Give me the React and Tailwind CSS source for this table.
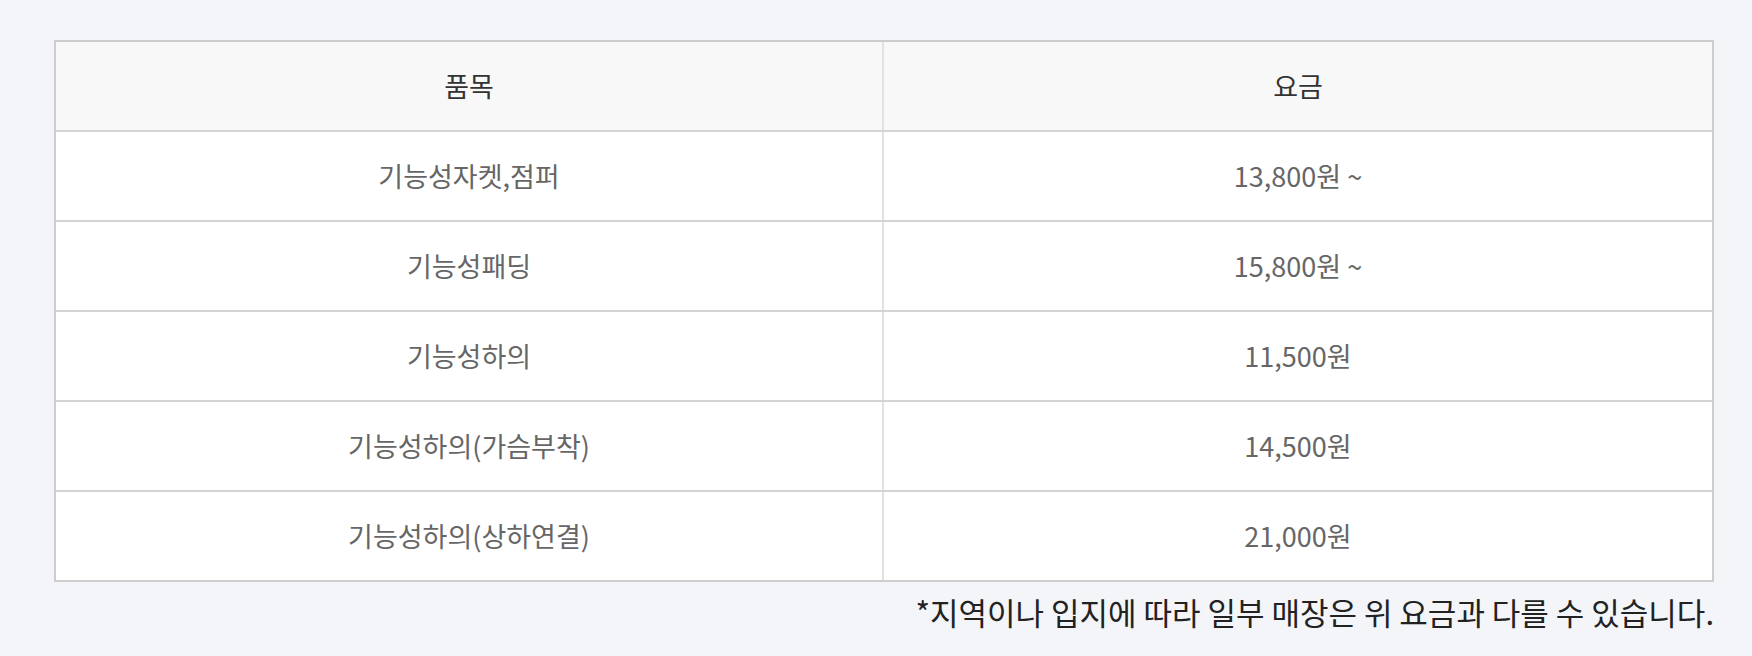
import React from "react";

const rows = [
  { name: "기능성자켓,점퍼", price: "13,800원 ~" },
  { name: "기능성패딩", price: "15,800원 ~" },
  { name: "기능성하의", price: "11,500원" },
  { name: "기능성하의(가슴부착)", price: "14,500원" },
  { name: "기능성하의(상하연결)", price: "21,000원" },
];

export default function App() {
  return (
    <div
      className="min-h-[656px] w-full bg-[#f4f5f9] pt-[40px]"
      style={{ fontFamily: '"Noto Sans CJK KR", "Noto Sans", sans-serif' }}
    >
      <div className="ml-[54px] w-[1660px]">
        {/* 요금표 */}
        <div className="border-2 border-[#cdcdcd]">
          <div className="grid grid-cols-2 border-b-2 border-[#d4d4d4] bg-[#f8f8f8]">
            <div className="flex h-[88px] items-center justify-center border-r-2 border-[#e2e2e2] text-[27px] text-[#333]">
              품목
            </div>
            <div className="flex h-[88px] items-center justify-center text-[27px] text-[#333]">
              요금
            </div>
          </div>
          {rows.map((row, i) => (
            <div
              key={row.name}
              className={
                i === rows.length - 1
                  ? "grid grid-cols-2 bg-white"
                  : "grid grid-cols-2 border-b-2 border-[#d4d4d4] bg-white"
              }
            >
              <div className="flex h-[88px] items-center justify-center border-r-2 border-[#e2e2e2] text-[27px] text-[#666]">
                {row.name}
              </div>
              <div className="flex h-[88px] items-center justify-center text-[27px] text-[#666]">
                {row.price}
              </div>
            </div>
          ))}
        </div>
        <p className="mt-[9px] text-right text-[31px] leading-[42px] text-[#222]">
          *지역이나 입지에 따라 일부 매장은 위 요금과 다를 수 있습니다.
        </p>
      </div>
    </div>
  );
}
